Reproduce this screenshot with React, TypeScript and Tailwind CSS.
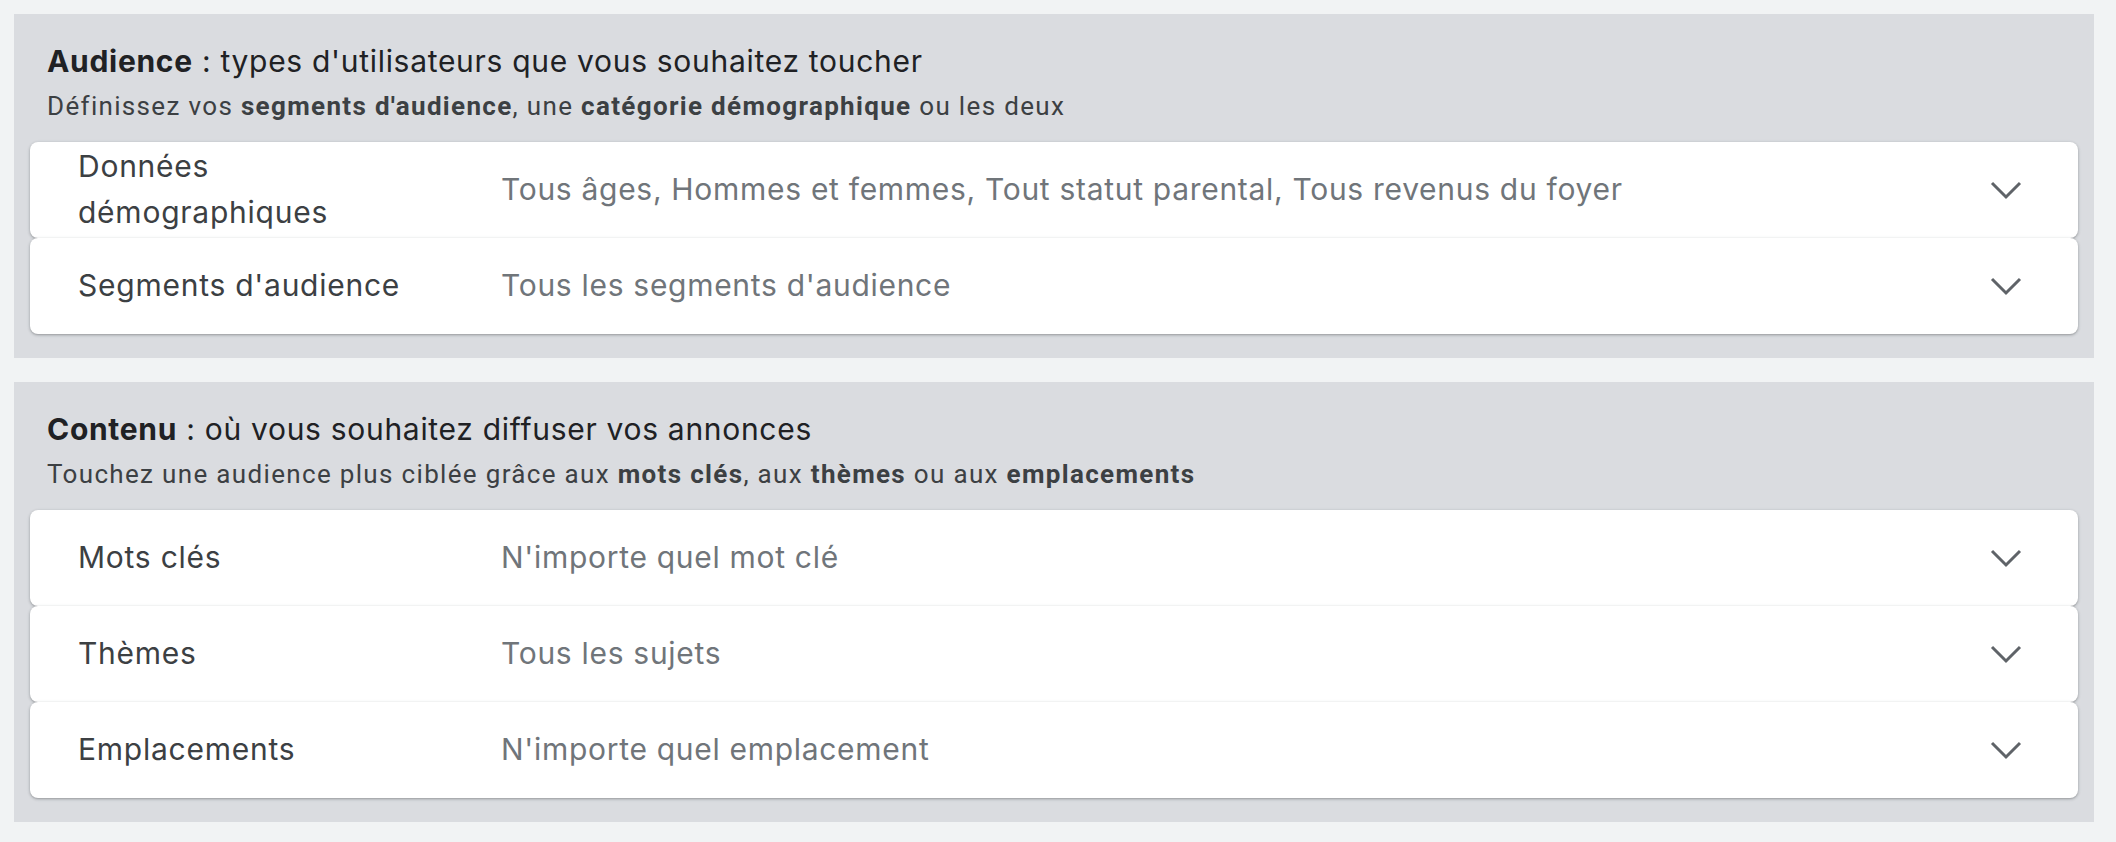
import React from "react";

const gs = { fontFamily: "Inter, 'Open Sans', sans-serif" };

function Chevron() {
  return (
    <svg width="32" height="20" viewBox="0 0 32 20" className="shrink-0">
      <polyline points="2,3 16,17 30,3" fill="none" stroke="#5f6368" strokeWidth="3" />
    </svg>
  );
}

function Row({ label, value }: { label: string; value: string }) {
  return (
    <div className="flex h-[96px] items-center rounded-[8px] bg-white pl-[48px] pr-[56px] shadow-[0_1px_2px_0_rgba(60,64,67,0.3),0_1px_3px_1px_rgba(60,64,67,0.12)]">
      <div
        className="w-[423px] shrink-0 pb-[2px] pr-[50px] text-[30px] leading-[46px] tracking-[0.75px] text-[#3c4043]"
        style={gs}
      >
        {label}
      </div>
      <div
        className="flex-1 pb-[2px] text-[30px] leading-[46px] tracking-[0.7px] text-[#70757a]"
        style={gs}
      >
        {value}
      </div>
      <Chevron />
    </div>
  );
}

function Panel({
  title,
  rest,
  sub,
  rows,
}: {
  title: string;
  rest: string;
  sub: React.ReactNode;
  rows: { label: string; value: string }[];
}) {
  return (
    <div className="bg-[#dadce0] px-[16px] pb-[24px] pt-[29px]">
      <div className="px-[17px]">
        <div className="text-[30px] leading-[36px] tracking-[0.7px] text-[#202124]" style={gs}>
          <span className="font-bold">{title}</span> {rest}
        </div>
        <div
          className="mt-[11px] text-[26px] leading-[32px] tracking-[1.33px] text-[#3c4043]"
          style={{ fontFamily: "Roboto, 'Liberation Sans', sans-serif" }}
        >
          {sub}
        </div>
      </div>
      <div className="mt-[20px] flex flex-col">
        {rows.map((r) => (
          <Row key={r.label} label={r.label} value={r.value} />
        ))}
      </div>
    </div>
  );
}

export default function App() {
  return (
    <div className="min-h-[842px] bg-[#f1f3f4] pb-[20px] pl-[14px] pr-[22px] pt-[14px]">
      <div className="flex flex-col gap-[24px]">
        <Panel
          title="Audience"
          rest=": types d'utilisateurs que vous souhaitez toucher"
          sub={
            <>
              Définissez vos <b className="font-bold">segments d'audience</b>, une{" "}
              <b className="font-bold">catégorie démographique</b> ou les deux
            </>
          }
          rows={[
            {
              label: "Données démographiques",
              value: "Tous âges, Hommes et femmes, Tout statut parental, Tous revenus du foyer",
            },
            { label: "Segments d'audience", value: "Tous les segments d'audience" },
          ]}
        />
        <Panel
          title="Contenu"
          rest=": où vous souhaitez diffuser vos annonces"
          sub={
            <>
              Touchez une audience plus ciblée grâce aux <b className="font-bold">mots clés</b>, aux{" "}
              <b className="font-bold">thèmes</b> ou aux <b className="font-bold">emplacements</b>
            </>
          }
          rows={[
            { label: "Mots clés", value: "N'importe quel mot clé" },
            { label: "Thèmes", value: "Tous les sujets" },
            { label: "Emplacements", value: "N'importe quel emplacement" },
          ]}
        />
      </div>
    </div>
  );
}
